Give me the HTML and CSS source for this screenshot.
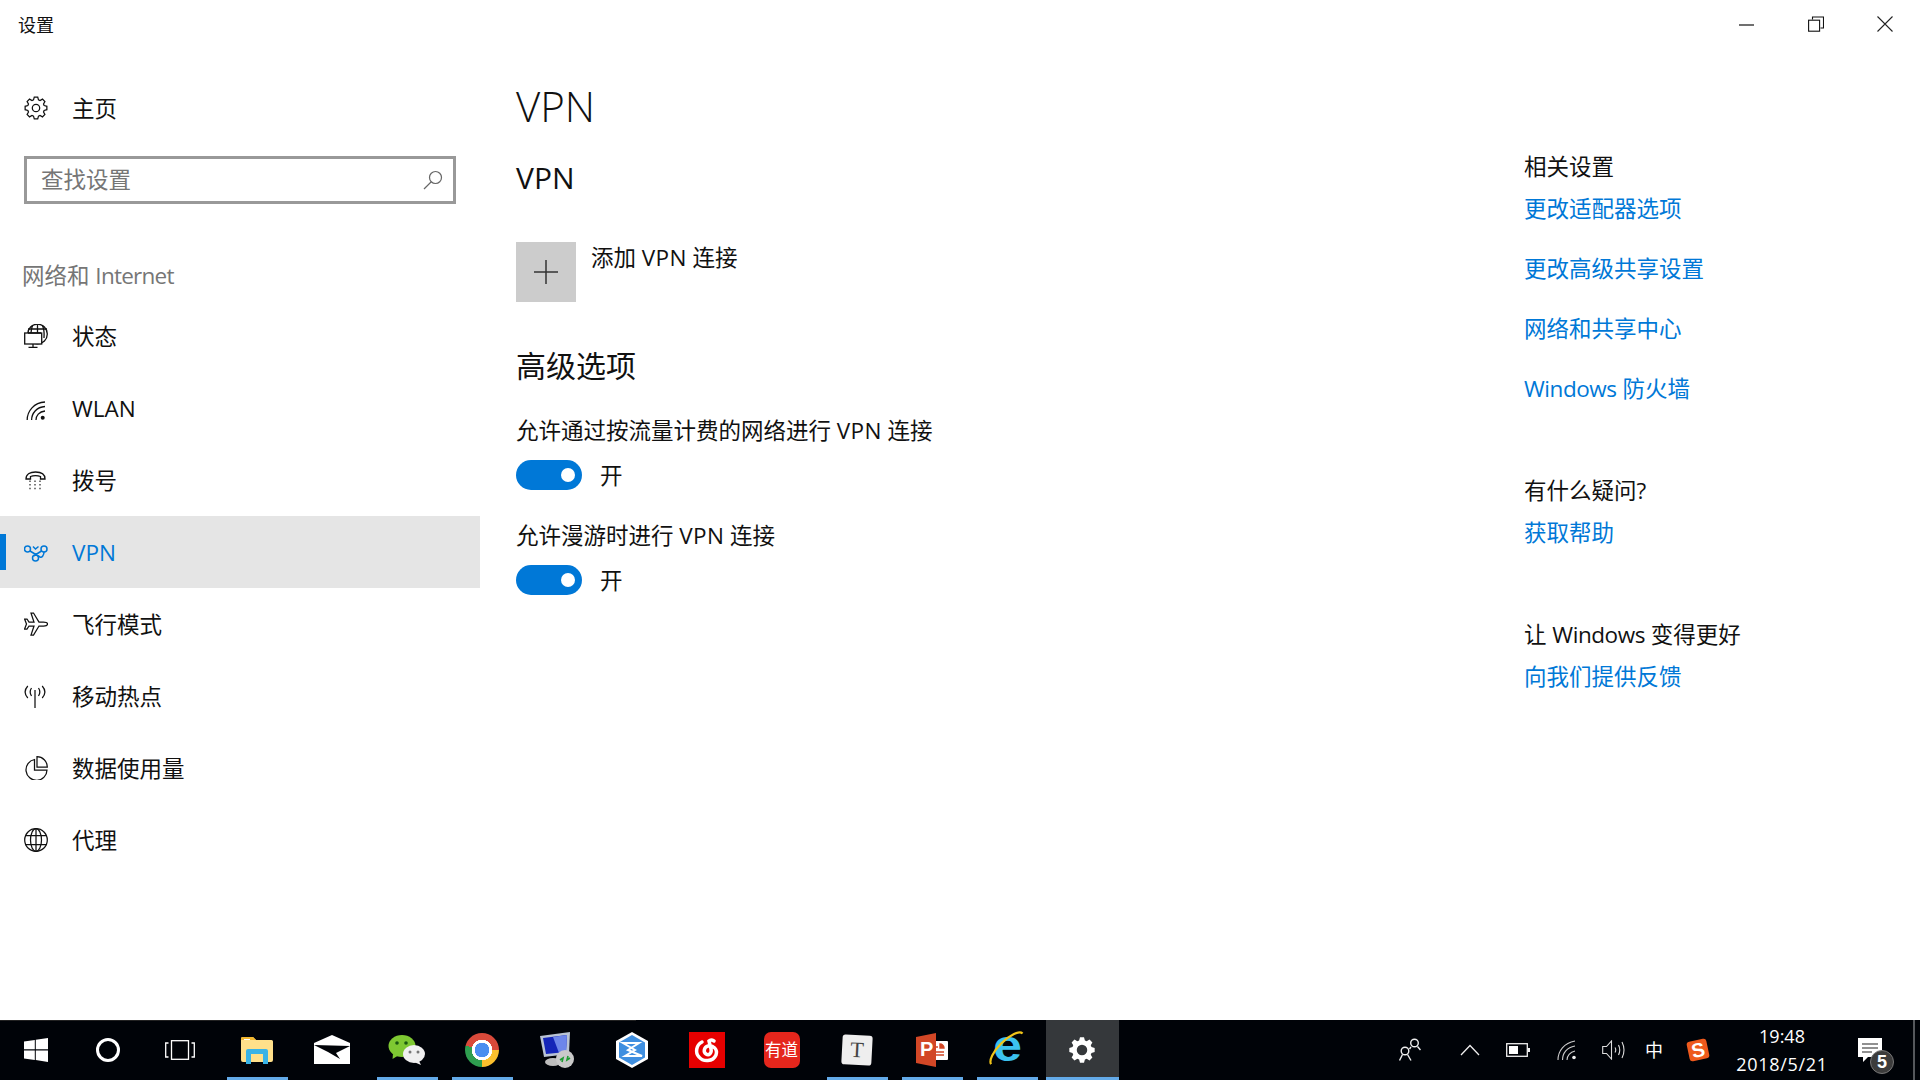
FILE: index.html
```html
<!DOCTYPE html>
<html lang="zh-CN">
<head>
<meta charset="utf-8">
<title>设置</title>
<link rel="stylesheet" href="styles.css">
</head>
<body>
<div class="screen">
  <div class="window">
    <header class="titlebar">
      <span class="title">设置</span>
      <div class="controls">
        <span class="ctl"><svg width="15" height="15" viewBox="0 0 15 15"><path d="M0 8h15" stroke="#111" stroke-width="1.2"/></svg></span>
        <span class="ctl"><svg width="16" height="16" viewBox="0 0 16 16" fill="none" stroke="#111" stroke-width="1.1"><path d="M4.500 3.500V1h11v11h-3"/><rect x=".6" y="4.200" width="11" height="11" fill="#fff"/></svg></span>
        <span class="ctl"><svg width="16" height="16" viewBox="0 0 16 16"><path d="M.5.5l15 15M15.500.5l-15 15" stroke="#222" stroke-width="1.1"/></svg></span>
      </div>
    </header>
    <div class="body">
      <nav class="sidebar">
        <div class="home">
          <svg class="ico" viewBox="-12 -12 24 24" fill="none" stroke="#111" stroke-width="1.25"><path d="M8.13-2.49 10.86-1.72V1.72L8.13 2.49 7.510 3.990 8.900 6.460 6.460 8.900 3.990 7.510 2.490 8.130 1.720 10.860H-1.720L-2.490 8.130-3.990 7.510-6.460 8.900-8.900 6.460-7.510 3.990-8.130 2.490-10.860 1.720V-1.720L-8.130-2.490-7.510-3.990-8.900-6.460-6.460-8.900-3.990-7.510-2.490-8.130-1.720-10.860H1.720L2.490-8.130 3.990-7.510 6.460-8.900 8.900-6.460 7.510-3.990Z"/><circle r="3.700"/></svg>
          <span class="nav-text">主页</span>
        </div>
        <div class="search">
          <span class="placeholder">查找设置</span>
          <svg class="search-ico" width="20" height="20" viewBox="0 0 20 20" fill="none" stroke="#666" stroke-width="1.2"><circle cx="12.500" cy="7.500" r="6"/><path d="M8.300 11.800 1 19"/></svg>
        </div>
        <div class="category">网络和 <span class="tight-more">Internet</span></div>
        <ul class="menu">
          <li class="item">
            <svg class="ico" viewBox="0 0 24 24" fill="none" stroke="#111" stroke-width="1.3"><circle cx="13.500" cy="10" r="9.800"/><path d="M4 5H23M8.500 1.500C7.500 4 7.200 6 7 9M13.500 .3V9M18.500 1.500C20 5 20.500 8 20 14"/><rect x=".7" y="9" width="17" height="11" fill="#fff"/><path d="M9 20v3M4.500 23.300h9M4 9H17"/></svg>
            <span class="nav-text">状态</span>
          </li>
          <li class="item">
            <svg class="ico" viewBox="0 0 24 24" fill="none" stroke="#111" stroke-width="1.3"><path d="M3.200 24C3.200 15 10 6.600 21 6M7.600 24C7.600 17.500 12.500 11 21 10.500M12 24C12 20 15 15.500 21 15"/><circle cx="18.700" cy="21.700" r="2" fill="#111" stroke="none"/></svg>
            <span class="nav-text">WLAN</span>
          </li>
          <li class="item">
            <svg class="ico" viewBox="0 0 24 24" fill="none" stroke="#111" stroke-width="1.3"><path d="M2 11C2 6 6.500 4 11.500 4S21 6 21 11H16.500V8.500C14 7.500 9 7.500 6.500 8.500V11Z"/><path d="M6 12.500v1.400M11 12.500v1.400M16 12.500v1.400M6 16v1.400M11 16v1.400M16 16v1.400M6 19.800v1.400M11 19.800v1.400M16 19.800v1.400" stroke-width="1.100"/></svg>
            <span class="nav-text">拨号</span>
          </li>
          <li class="item active">
            <svg class="ico" viewBox="0 0 24 24" fill="none" stroke="#0078d7" stroke-width="1.500"><circle cx="3.500" cy="9" r="3"/><circle cx="20" cy="9" r="3"/><circle cx="11.500" cy="18" r="3"/><path d="M6 11 16 17C18 18 20 15 20 12M17.500 11 9.500 16M9 6.500l2.500 2.500L14.500 6.500"/></svg>
            <span class="nav-text">VPN</span>
          </li>
          <li class="item">
            <svg class="ico" viewBox="0 0 24 24" fill="none" stroke="#111" stroke-width="1.250"><path d="M23.500 12c0-1.500-2-2-4-2H15L9.500 1H7L10 10H5L3 7H.6L2.500 12 .6 17H3L5 14H10L7 23H9.500L15 14H19.500C21.500 14 23.500 13.500 23.500 12Z"/></svg>
            <span class="nav-text">飞行模式</span>
          </li>
          <li class="item">
            <svg class="ico" viewBox="0 0 24 24" fill="none" stroke="#111" stroke-width="1.250"><path d="M11 6V24M3.800 2C.2 6 .2 10 3.800 14M7.500 4C5.500 7 5.500 9 7.500 12M18.200 2C21.800 6 21.800 10 18.200 14M14.500 4C16.500 7 16.500 9 14.500 12"/></svg>
            <span class="nav-text">移动热点</span>
          </li>
          <li class="item">
            <svg class="ico" viewBox="0 0 24 24" fill="none" stroke="#111" stroke-width="1.250"><path d="M10.500 3.500A10.500 10.500 0 1 0 23 14H10.500Z"/><path d="M13 .7A10.300 10.300 0 0 1 23.300 11H13Z"/></svg>
            <span class="nav-text">数据使用量</span>
          </li>
          <li class="item">
            <svg class="ico" viewBox="0 0 24 24" fill="none" stroke="#111" stroke-width="1.250"><circle cx="12" cy="12" r="11.300"/><ellipse cx="12" cy="12" rx="5.500" ry="11.300"/><path d="M12 .7V23.300M1.800 7.500H22.200M1.800 16.500H22.200"/></svg>
            <span class="nav-text">代理</span>
          </li>
        </ul>
      </nav>
      <main class="content">
        <h1 class="page-title">VPN</h1>
        <h2 class="section first">VPN</h2>
        <div class="add-row">
          <span class="add-btn"><svg width="26" height="26" viewBox="0 0 26 26"><path d="M13 1V25M1 13H25" stroke="#333" stroke-width="1.500"/></svg></span>
          <span class="add-label">添加 <span class="wide">VPN</span> 连接</span>
        </div>
        <h2 class="section">高级选项</h2>
        <div class="setting">
          <div class="setting-label">允许通过按流量计费的网络进行 <span class="wide">VPN</span> 连接</div>
          <div class="toggle-row"><span class="toggle"></span><span class="state">开</span></div>
        </div>
        <div class="setting second">
          <div class="setting-label">允许漫游时进行 <span class="wide">VPN</span> 连接</div>
          <div class="toggle-row"><span class="toggle"></span><span class="state">开</span></div>
        </div>
      </main>
      <aside class="related">
        <div class="group">
          <div class="group-title">相关设置</div>
          <a class="link">更改适配器选项</a>
          <a class="link">更改高级共享设置</a>
          <a class="link">网络和共享中心</a>
          <a class="link"><span class="tight">Windows</span> 防火墙</a>
        </div>
        <div class="group">
          <div class="group-title">有什么疑问?</div>
          <a class="link">获取帮助</a>
        </div>
        <div class="group">
          <div class="group-title">让 <span class="tight">Windows</span> 变得更好</div>
          <a class="link">向我们提供反馈</a>
        </div>
      </aside>
    </div>
  </div>
  <footer class="taskbar">
    <div class="sys">
      <span class="sys-btn"><svg width="24" height="24" viewBox="0 0 24 24" fill="#fff"><path d="M0 3.500 10.800 2V11.300H0ZM11.800 1.800 24 0V11.300H11.800ZM0 12.400H10.800V21.900L0 20.500ZM11.800 12.400H24V24L11.800 22.100Z"/></svg></span>
      <span class="sys-btn"><svg width="26" height="26" viewBox="0 0 26 26" fill="none"><circle cx="13" cy="13" r="10.500" stroke="#fff" stroke-width="3"/></svg></span>
      <span class="sys-btn"><svg width="30" height="20" viewBox="0 0 30 20" fill="none" stroke="#fff" stroke-width="1.300"><rect x="6.500" y=".7" width="17" height="18.600"/><path d="M3.500 3H.7V17H3.500M26.500 3H29.300V17H26.500"/></svg></span>
    </div>
    <div class="tasks">
      <span class="task open">
        <svg width="32" height="28" viewBox="0 0 32 28"><path d="M0 2.500Q0 1 1.500 1H12L15 4H30.500Q32 4 32 5.500V24Q32 26 30 26H2Q0 26 0 24Z" fill="#ffe08a"/><path d="M0 2.500Q0 1 1.500 1H12L15 4H0Z" fill="#f2b830"/><path d="M3 3h6v1H3Z" fill="#fff"/><path d="M5 28V15Q5 13 7 13H25Q27 13 27 15V28H22V18H10V28Z" fill="#39b3e6"/></svg>
      </span>
      <span class="task">
        <svg width="36" height="30" viewBox="0 0 36 30"><path d="M0 8 18 0 36 8V29H0Z" fill="#fff"/><path d="M0 10 36 11 22 18 26 24 14 17Z" fill="#000308"/></svg>
      </span>
      <span class="task open">
        <svg width="37" height="30" viewBox="0 0 37 30"><ellipse cx="14" cy="11" rx="13.500" ry="11" fill="#7ec832"/><path d="M5 19 4.500 24 11 20Z" fill="#7ec832"/><circle cx="9" cy="8" r="1.800" fill="#1a5a10"/><circle cx="18" cy="8" r="1.800" fill="#1a5a10"/><ellipse cx="26" cy="19" rx="11" ry="9" fill="#f0f0f0"/><path d="M31 26 33 30 26 27Z" fill="#f0f0f0"/><circle cx="22" cy="17" r="1.500" fill="#777"/><circle cx="30" cy="17" r="1.500" fill="#777"/></svg>
      </span>
      <span class="task open"><span class="chrome"></span></span>
      <span class="task">
        <svg width="36" height="36" viewBox="0 0 36 36"><path d="M1 4 31 0 30 22 5 25Z" fill="#b9c3d4"/><path d="M4 6 28 3 27 20 7 22Z" fill="#1425b8"/><path d="M14 5 28 3 27 20 20 21Z" fill="#6d86ea"/><ellipse cx="14" cy="30" rx="8" ry="4" fill="#bdbdbd"/><circle cx="26" cy="27" r="9" fill="#c9c9c9"/><path d="M21 28l3-2-1 4M31 26l-3 2 1-4" stroke="#1c9c31" stroke-width="1.600" fill="none"/></svg>
      </span>
      <span class="task">
        <svg width="32" height="36" viewBox="0 0 32 36"><path d="M16 0 32 9V27L16 36 0 27V9Z" fill="#fff"/><path d="M16 3 29 10.500V25.500L16 33 3 25.500V10.500Z" fill="#3f8fe0"/><path d="M7 11H23L12 18 26 24H9L19 18Z" fill="none" stroke="#fff" stroke-width="2"/></svg>
      </span>
      <span class="task">
        <svg width="36" height="36" viewBox="0 0 36 36"><rect width="36" height="36" fill="#e60000"/><g fill="none" stroke="#fff" stroke-width="3.500" stroke-linecap="round"><path d="M13 10C7 13 6 21 10 25C14 30 24 30 27 23C29 17 24 13 19 14C15 15 14 20 17 22C20 24 23 21 22 17L20 9Q22 7 25 9"/></g></svg>
      </span>
      <span class="task"><span class="youdao">有道</span></span>
      <span class="task open"><span class="note">T</span></span>
      <span class="task open">
        <svg width="32" height="34" viewBox="0 0 32 34"><path d="M13 8H31Q32 8 32 9V26Q32 27 31 27H13Z" fill="#fff"/><path d="M16 14H22M24 11A4 4 0 0 1 28 15H24ZM16 19H28M16 22H28" stroke="#d24726" stroke-width="1.400" fill="#d24726"/><path d="M0 4 20 0V34L0 30Z" fill="#d24726"/><text class="ppt-p" x="4" y="23">P</text></svg>
      </span>
      <span class="task open">
        <svg width="60" height="60" viewBox="0 0 60 60"><text class="ie-e" x="16" y="41" textLength="29" lengthAdjust="spacingAndGlyphs">e</text><ellipse cx="30" cy="29" rx="22" ry="8" transform="rotate(-45 30 29)" fill="none" stroke="#f0c419" stroke-width="2.200" stroke-dasharray="0 50 54"/></svg>
      </span>
      <span class="task active">
        <svg width="28" height="28" viewBox="-12 -12 24 24"><path fill="#fff" fill-rule="evenodd" d="M8.13-2.49 10.86-1.72V1.72L8.13 2.49 7.510 3.990 8.900 6.460 6.460 8.900 3.990 7.510 2.490 8.130 1.720 10.860H-1.720L-2.490 8.130-3.990 7.510-6.460 8.900-8.900 6.460-7.510 3.990-8.130 2.490-10.860 1.720V-1.720L-8.130-2.490-7.510-3.990-8.900-6.460-6.460-8.900-3.990-7.510-2.490-8.130-1.720-10.860H1.720L2.490-8.130 3.990-7.510 6.460-8.900 8.900-6.460 7.510-3.990ZM4.500 0A4.500 4.500 0 1 0-4.500 0 4.500 4.500 0 1 0 4.500 0Z"/></svg>
      </span>
    </div>
    <div class="tray">
      <span class="tray-item w-people"><svg width="22" height="24" viewBox="0 0 22 24" fill="none" stroke="#eee" stroke-width="1.400"><circle cx="15.500" cy="5" r="3.800"/><path d="M12 9 10.500 11M18.500 8.500 21.500 12"/><circle cx="6" cy="13" r="3.800"/><path d="M3.500 16.500 .5 22.500M8.500 16.500 12 22.500"/></svg></span>
      <span class="tray-item w-chev"><svg width="20" height="12" viewBox="0 0 20 12" fill="none" stroke="#eee" stroke-width="1.300"><path d="M1 11 10 1.500 19 11"/></svg></span>
      <span class="tray-item w-batt"><svg width="24" height="14" viewBox="0 0 24 14"><rect x=".7" y=".7" width="20.600" height="12.600" fill="none" stroke="#eee" stroke-width="1.300"/><rect x="3" y="3" width="9" height="8" fill="#fff"/><rect x="22" y="5" width="2" height="4" fill="#eee"/></svg></span>
      <span class="tray-item w-wifi"><svg width="20" height="20" viewBox="0 0 20 20" fill="none" stroke="#ccc" stroke-width="1.100"><path d="M1 20C1 11 7 3 18 1M5.500 20C5.500 13 10 7.500 18 6M10 20C10 16 13 12 18 11"/><circle cx="17" cy="17.500" r="1.800" fill="#eee" stroke="none"/></svg></span>
      <span class="tray-item w-vol"><svg width="23" height="20" viewBox="0 0 23 20" fill="none" stroke="#ddd" stroke-width="1.100"><path d="M.7 6.500H4.500L9.500 1V19L4.500 13.500H.7Z"/><path d="M13 7.500Q14.500 10 13 12.500M16.500 5Q19 10 16.500 15M20 2Q24 10 20 18"/></svg></span>
      <span class="tray-item w-ime">中</span>
      <span class="tray-item w-sogou"><span class="sogou">S</span></span>
      <span class="tray-item clock"><span>19:48</span><span class="date">2018/5/21</span></span>
      <span class="tray-item w-note">
        <svg width="24" height="24" viewBox="0 0 24 24"><path d="M0 0H24V19H10L5 24V19H0Z" fill="#fff"/><path d="M4 6H20M4 10H20M4 14H14" stroke="#222" stroke-width="1.200"/></svg>
        <span class="badge">5</span>
      </span>
      <span class="desk"></span>
    </div>
  </footer>
</div>
</body>
</html>
```

FILE: styles.css
```css
* { box-sizing: border-box; }
html, body { margin: 0; padding: 0; }
body {
  font-family: "Open Sans", "Noto Sans CJK SC", sans-serif;
  font-size: 22.5px;
  line-height: 30px;
  color: #111;
  background: #fff;
}
.screen { width: 1920px; height: 1080px; display: flex; flex-direction: column; overflow: hidden; }
.window { flex: 1; display: flex; flex-direction: column; min-height: 0; }
.tight { letter-spacing: -0.45px; }
.tight-more { letter-spacing: -0.75px; }
.wide { letter-spacing: 0.3px; }

.titlebar { height: 48px; display: flex; align-items: center; justify-content: space-between; padding: 2px 1px 0 18px; }
.title { font-size: 18px; }
.controls { display: flex; margin-top: -2px; }
.ctl { width: 69px; height: 48px; display: flex; align-items: center; justify-content: center; }

.body { flex: 1; display: flex; min-height: 0; }
.sidebar { width: 480px; flex: none; }
.home { height: 72px; margin-top: 24px; display: flex; align-items: center; gap: 24px; padding-left: 24px; }
.nav-text { margin-top: 2px; }
.ico { width: 24px; height: 24px; flex: none; }
.search { margin: 12px 24px 0; height: 48px; border: 3px solid #999; display: flex; align-items: center; justify-content: space-between; padding: 0 10px 0 14px; }
.placeholder { color: #767676; }
.search-ico { flex: none; }
.category { margin: 57px 0 9px 22px; color: #767676; }
.menu { list-style: none; margin: 0; padding: 0; }
.item { position: relative; height: 72px; display: flex; align-items: center; gap: 24px; padding-left: 24px; }
.item.active { background: #e5e5e5; color: #0078d7; }
.item.active::before { content: ""; position: absolute; left: 0; top: 18px; width: 6px; height: 36px; background: #0078d7; }

.content { flex: 1; padding-left: 36px; }
.page-title { margin: 28px 0 0; font-size: 42px; line-height: 60px; font-weight: 300; }
.section { margin: 44px 0 0; font-size: 30px; line-height: 40px; font-weight: 400; }
.section.first { margin-top: 22px; }
.add-row { margin-top: 44px; display: flex; gap: 15px; }
.add-btn { width: 60px; height: 60px; background: #ccc; display: flex; align-items: center; justify-content: center; }
.add-label { margin-top: 1px; }
.setting { margin-top: 30px; }
.setting.second { margin-top: 31px; }
.toggle-row { margin-top: 14px; display: flex; align-items: center; gap: 18px; height: 30px; }
.state { margin-top: 2px; }
.toggle { position: relative; width: 66px; height: 30px; border-radius: 15px; background: #0078d7; }
.toggle::after { content: ""; position: absolute; right: 7px; top: 8px; width: 14px; height: 14px; border-radius: 50%; background: #fff; }

.related { width: 396px; flex: none; padding-top: 104px; }
.group { display: flex; flex-direction: column; align-items: flex-start; margin-bottom: 72px; }
.group-title { margin-bottom: 12px; }
.link { color: #0078d7; }
.link + .link { margin-top: 30px; }

.taskbar { position: relative; height: 60px; flex: none; display: flex; align-items: stretch; background: #000308; color: #fff; }
.taskbar::before { content: ""; position: absolute; left: 0; top: 0; width: 636px; height: 1px; background: #222; }
.sys { display: flex; margin-right: 5px; }
.sys-btn { width: 72px; display: flex; align-items: center; justify-content: center; }
.tasks { display: flex; gap: 2px; }
.task { position: relative; width: 73px; padding-right: 2px; display: flex; align-items: center; justify-content: center; }
.task.open::after { content: ""; position: absolute; left: 6px; right: 6px; bottom: 0; height: 3px; background: #63aae8; }
.task.active { background: #35383b; }
.task.active::after { content: ""; position: absolute; left: 0; right: 0; bottom: 0; height: 3px; background: #63aae8; }
.chrome {
  width: 34px; height: 34px; border-radius: 50%;
  background:
    radial-gradient(circle, #4a8ef0 0 30%, #fff 31% 42%, transparent 43%),
    conic-gradient(from -75deg, #d8493a 0 165deg, #fbc02d 165deg 255deg, #2e9e4f 255deg);
}
.youdao { width: 36px; height: 36px; border-radius: 7px; background: #e5261c; font-size: 16.5px; line-height: 36px; text-align: center; white-space: nowrap; }
.note { width: 30px; height: 30px; background: #eee; border-radius: 3px; color: #444; transform: rotate(3deg); font-family: "Liberation Serif", serif; font-size: 22px; line-height: 30px; text-align: center; }
.ppt-p { font-family: "Liberation Sans", sans-serif; font-weight: 700; font-size: 20px; fill: #fff; }
.ie-e { font-family: "Liberation Sans", sans-serif; font-weight: 700; font-size: 44px; fill: #3cc2ef; }

.tray { margin-left: auto; display: flex; align-items: stretch; }
.tray-item { display: flex; align-items: center; justify-content: center; }
.w-people { width: 60px; }
.w-chev { width: 60px; }
.w-batt { width: 36px; }
.w-wifi { width: 61px; }
.w-vol { width: 32px; }
.w-ime { width: 50px; font-size: 18px; }
.w-sogou { width: 38px; }
.sogou { width: 20px; height: 20px; background: #ee5a1d; border-radius: 3px; color: #fff; font-family: "Liberation Sans", sans-serif; font-weight: 700; font-size: 20px; line-height: 20px; text-align: center; transform: rotate(-12deg); }
.clock { width: 125px; padding-left: 5px; flex-direction: column; font-size: 18px; line-height: 28px; }
.date { letter-spacing: 0.7px; }
.w-note { position: relative; width: 66px; justify-content: flex-start; padding-left: 16px; }
.badge { position: absolute; left: 28px; top: 30px; width: 24px; height: 24px; border-radius: 50%; background: #3c3c3c; border: 1px solid #777; font-family: "Liberation Sans", sans-serif; font-weight: 700; font-size: 18px; line-height: 22px; text-align: center; }
.desk { width: 12px; position: relative; }
.desk::after { content: ""; position: absolute; left: 5px; top: 0; bottom: 0; width: 2px; background: #55585c; }
```
